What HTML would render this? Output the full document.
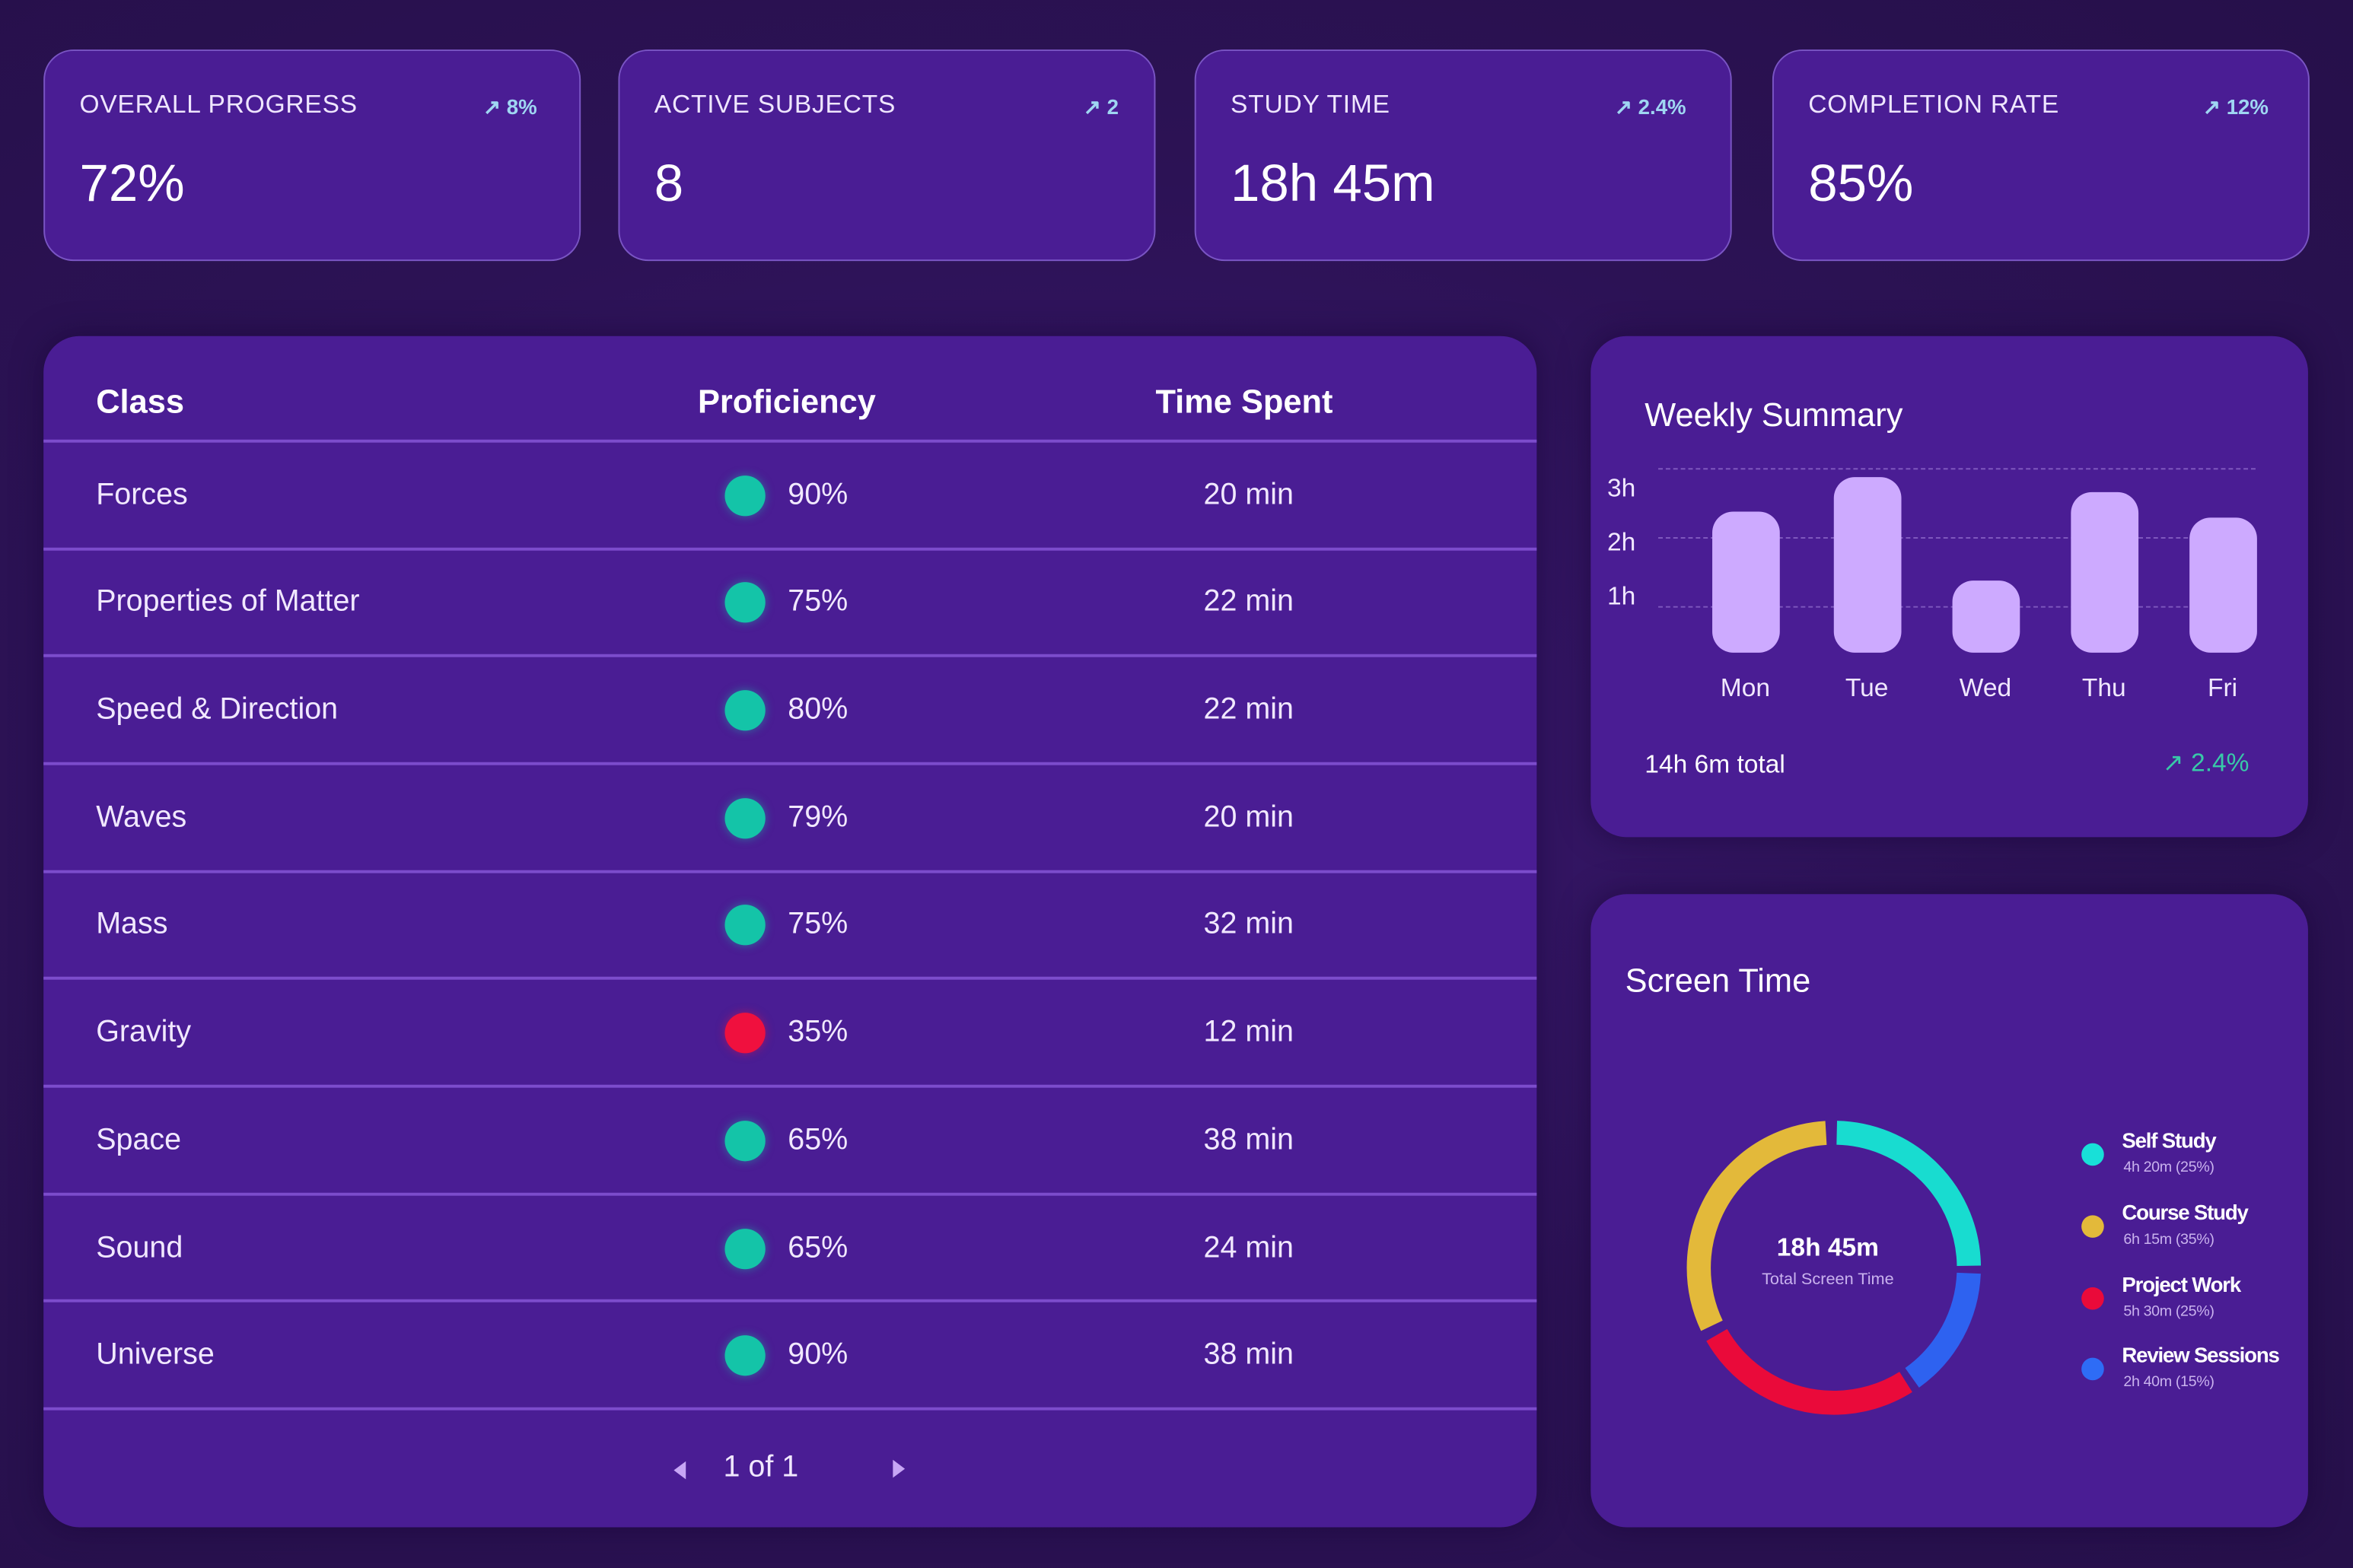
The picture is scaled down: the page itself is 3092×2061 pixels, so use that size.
<!DOCTYPE html>
<html><head><meta charset="utf-8">
<style>
*{margin:0;padding:0;box-sizing:border-box}
html,body{width:3092px;height:2060px;overflow:hidden;background:#2a1150}
body{font-family:"Liberation Sans",sans-serif;color:#f3ecff}
#w{position:absolute;left:0;top:0;width:1568px;height:1045px;transform:scale(1.972);transform-origin:0 0;
background:radial-gradient(ellipse at 45% 50%,#3a1870 0%,#2c1255 55%,#26104a 100%)}
.a{position:absolute;white-space:nowrap}
.card{position:absolute;background:#4a1d94;border:1.5px solid #7a55c4;border-radius:20px}
.panel{position:absolute;background:#4a1d94;border-radius:24px;box-shadow:0 0 20px rgba(20,0,50,.5)}
.lbl{font-size:17px;letter-spacing:.4px;color:#efe6ff}
.val{font-size:35px;color:#fff}
.dl{font-size:14px;color:#9fd6f2;font-weight:bold}
.th{font-size:22px;font-weight:bold;color:#fff}
.td{font-size:20px;color:#f1e8ff}
.ln{position:absolute;left:29px;width:995px;height:2px;background:#7c4ccc}
.dot{position:absolute;width:27px;height:27px;border-radius:50%;background:#14c4a8;box-shadow:0 0 6px rgba(20,196,168,.5)}
.bar{position:absolute;width:45px;background:#cdaaff;border-radius:14px}
.dash{position:absolute;left:1105px;width:398px;border-top:1.5px dashed rgba(190,160,240,.45)}
.ax{font-size:17px;color:#f1e8ff}
.day{font-size:17px;color:#f1e8ff;width:60px;text-align:center}
.lg{font-size:14px;color:#fff;font-weight:bold;letter-spacing:-.6px}
.lgs{font-size:10px;color:#c9b2ee;letter-spacing:-.2px}
.ld{position:absolute;width:15px;height:15px;border-radius:50%}
</style></head><body><div id="w">

<div class="card" style="left:29px;top:33px;width:358px;height:141px"></div>
<div class="card" style="left:412px;top:33px;width:358px;height:141px"></div>
<div class="card" style="left:796px;top:33px;width:358px;height:141px"></div>
<div class="card" style="left:1181px;top:33px;width:358px;height:141px"></div>

<div class="a lbl" style="left:53px;top:60px">OVERALL PROGRESS</div>
<div class="a dl" style="left:322px;top:63px">↗ 8%</div>
<div class="a val" style="left:53px;top:103px">72%</div>

<div class="a lbl" style="left:436px;top:60px">ACTIVE SUBJECTS</div>
<div class="a dl" style="left:722px;top:63px">↗ 2</div>
<div class="a val" style="left:436px;top:103px">8</div>

<div class="a lbl" style="left:820px;top:60px">STUDY TIME</div>
<div class="a dl" style="left:1076px;top:63px">↗ 2.4%</div>
<div class="a val" style="left:820px;top:103px">18h 45m</div>

<div class="a lbl" style="left:1205px;top:60px">COMPLETION RATE</div>
<div class="a dl" style="left:1468px;top:63px">↗ 12%</div>
<div class="a val" style="left:1205px;top:103px">85%</div>

<div class="panel" style="left:29px;top:224px;width:995px;height:794px"></div>
<div class="a th" style="left:64px;top:255px">Class</div>
<div class="a th" style="left:465px;top:255px">Proficiency</div>
<div class="a th" style="left:770px;top:255px">Time Spent</div>
<div class="ln" style="top:293px"></div>

<div class="a td" style="left:64px;top:319px">Forces</div><div class="dot" style="left:483px;top:317px"></div><div class="a td" style="left:525px;top:319px">90%</div><div class="a td" style="left:802px;top:319px">20 min</div>
<div class="ln" style="top:365px"></div>
<div class="a td" style="left:64px;top:390px">Properties of Matter</div><div class="dot" style="left:483px;top:388px"></div><div class="a td" style="left:525px;top:390px">75%</div><div class="a td" style="left:802px;top:390px">22 min</div>
<div class="ln" style="top:436px"></div>
<div class="a td" style="left:64px;top:462px">Speed &amp; Direction</div><div class="dot" style="left:483px;top:460px"></div><div class="a td" style="left:525px;top:462px">80%</div><div class="a td" style="left:802px;top:462px">22 min</div>
<div class="ln" style="top:508px"></div>
<div class="a td" style="left:64px;top:534px">Waves</div><div class="dot" style="left:483px;top:532px"></div><div class="a td" style="left:525px;top:534px">79%</div><div class="a td" style="left:802px;top:534px">20 min</div>
<div class="ln" style="top:580px"></div>
<div class="a td" style="left:64px;top:605px">Mass</div><div class="dot" style="left:483px;top:603px"></div><div class="a td" style="left:525px;top:605px">75%</div><div class="a td" style="left:802px;top:605px">32 min</div>
<div class="ln" style="top:651px"></div>
<div class="a td" style="left:64px;top:677px">Gravity</div><div class="dot" style="left:483px;top:675px;background:#f0103e;box-shadow:0 0 6px rgba(240,16,62,.5)"></div><div class="a td" style="left:525px;top:677px">35%</div><div class="a td" style="left:802px;top:677px">12 min</div>
<div class="ln" style="top:723px"></div>
<div class="a td" style="left:64px;top:749px">Space</div><div class="dot" style="left:483px;top:747px"></div><div class="a td" style="left:525px;top:749px">65%</div><div class="a td" style="left:802px;top:749px">38 min</div>
<div class="ln" style="top:795px"></div>
<div class="a td" style="left:64px;top:821px">Sound</div><div class="dot" style="left:483px;top:819px"></div><div class="a td" style="left:525px;top:821px">65%</div><div class="a td" style="left:802px;top:821px">24 min</div>
<div class="ln" style="top:866px"></div>
<div class="a td" style="left:64px;top:892px">Universe</div><div class="dot" style="left:483px;top:890px"></div><div class="a td" style="left:525px;top:892px">90%</div><div class="a td" style="left:802px;top:892px">38 min</div>
<div class="ln" style="top:938px"></div>

<div class="a" style="left:449px;top:974px;width:0;height:0;border-top:6px solid transparent;border-bottom:6px solid transparent;border-right:8px solid #c7a6f5"></div>
<div class="a td" style="left:482px;top:967px">1 of 1</div>
<div class="a" style="left:595px;top:973px;width:0;height:0;border-top:6px solid transparent;border-bottom:6px solid transparent;border-left:8px solid #c7a6f5"></div>

<div class="panel" style="left:1060px;top:224px;width:478px;height:334px"></div>
<div class="a" style="left:1096px;top:264px;font-size:22px;color:#fff">Weekly Summary</div>
<div class="dash" style="top:312px"></div>
<div class="dash" style="top:358px"></div>
<div class="dash" style="top:404px"></div>
<div class="a ax" style="left:1071px;top:316px">3h</div>
<div class="a ax" style="left:1071px;top:352px">2h</div>
<div class="a ax" style="left:1071px;top:388px">1h</div>
<div class="bar" style="left:1141px;top:341px;height:94px"></div>
<div class="bar" style="left:1222px;top:318px;height:117px"></div>
<div class="bar" style="left:1301px;top:387px;height:48px"></div>
<div class="bar" style="left:1380px;top:328px;height:107px"></div>
<div class="bar" style="left:1459px;top:345px;height:90px"></div>
<div class="a day" style="left:1133px;top:449px">Mon</div>
<div class="a day" style="left:1214px;top:449px">Tue</div>
<div class="a day" style="left:1293px;top:449px">Wed</div>
<div class="a day" style="left:1372px;top:449px">Thu</div>
<div class="a day" style="left:1451px;top:449px">Fri</div>
<div class="a" style="left:1096px;top:500px;font-size:17px;color:#fff">14h 6m total</div>
<div class="a" style="left:1441px;top:499px;font-size:17px;color:#38c9a8">↗ 2.4%</div>

<div class="panel" style="left:1060px;top:596px;width:478px;height:422px"></div>
<div class="a" style="left:1083px;top:641px;font-size:22px;color:#fff">Screen Time</div>
<svg class="a" style="left:1112px;top:735px" width="220" height="220" viewBox="0 0 220 220">
<g transform="rotate(-90 110 110)" fill="none" stroke-width="16">
<circle cx="110" cy="110" r="90" stroke="#18dcd0" stroke-dasharray="138 1000" stroke-dashoffset="-2"/>
<circle cx="110" cy="110" r="90" stroke="#2e62f0" stroke-dasharray="82 1000" stroke-dashoffset="-145"/>
<circle cx="110" cy="110" r="90" stroke="#ea0a3a" stroke-dasharray="145 1000" stroke-dashoffset="-232"/>
<circle cx="110" cy="110" r="90" stroke="#e3b93a" stroke-dasharray="176 1000" stroke-dashoffset="-384"/>
</g></svg>
<div class="a" style="left:1162px;top:822px;width:112px;text-align:center;font-size:17px;font-weight:bold;color:#fff">18h 45m</div>
<div class="a" style="left:1152px;top:847px;width:132px;text-align:center;font-size:11px;color:#c9b2ee">Total Screen Time</div>

<div class="ld" style="left:1387px;top:762px;background:#18e0d8"></div>
<div class="a lg" style="left:1414px;top:752px">Self Study</div><div class="a lgs" style="left:1415px;top:773px">4h 20m (25%)</div>
<div class="ld" style="left:1387px;top:810px;background:#e3b93a"></div>
<div class="a lg" style="left:1414px;top:800px">Course Study</div><div class="a lgs" style="left:1415px;top:821px">6h 15m (35%)</div>
<div class="ld" style="left:1387px;top:858px;background:#ea0a3a"></div>
<div class="a lg" style="left:1414px;top:848px">Project Work</div><div class="a lgs" style="left:1415px;top:869px">5h 30m (25%)</div>
<div class="ld" style="left:1387px;top:905px;background:#2e6cf6"></div>
<div class="a lg" style="left:1414px;top:895px">Review Sessions</div><div class="a lgs" style="left:1415px;top:916px">2h 40m (15%)</div>

</div></body></html>
